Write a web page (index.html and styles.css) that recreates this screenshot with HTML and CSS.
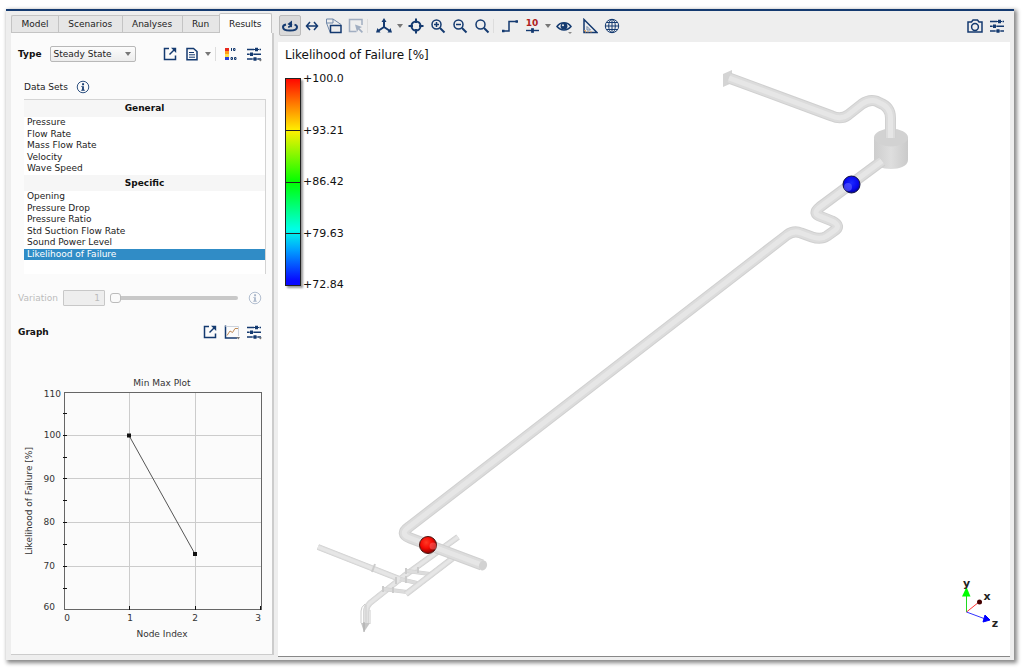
FILE: index.html
```html
<!DOCTYPE html>
<html lang="en">
<head>
<meta charset="utf-8">
<title>Likelihood of Failure</title>
<link rel="stylesheet" href="styles.css">
</head>
<body>
<svg class="defs" aria-hidden="true">
  <defs>
    <symbol id="i-export" viewBox="0 0 16 16"><path d="M7 2.500H2.500V13.500H13.500V9.500" class="ln"/><path d="M7.500 8.500 12 4" class="ln"/><path d="M9 1.800h5.200V7z" class="fl"/></symbol>
    <symbol id="i-sliders" viewBox="0 0 16 16"><path d="M1 3.500h7M13.500 3.500H15M1 8.200h2M7.500 8.200H15M1 13h5.500M11.500 13H15" class="ln"/><path d="M8 3.500h5M3 8.200h4.500M6.500 13h5" class="thin"/><path d="M9 1.800h3v3.400H9zM4 6.500h3v3.400H4zM7.500 11.300h3v3.400h-3z" class="fl"/></symbol>
    <symbol id="i-info" viewBox="0 0 16 16"><circle cx="8" cy="8" r="6.600" class="thin"/><path d="M7 3.800h2.200V6H7zM6 7h3v4h1v1.200H6V11h1V8H6z" class="fl"/></symbol>
  </defs>
</svg>

<div class="window">
  <aside class="sidebar">
    <nav class="tabs" role="tablist">
      <button class="tab" role="tab">Model</button>
      <button class="tab" role="tab">Scenarios</button>
      <button class="tab" role="tab">Analyses</button>
      <button class="tab" role="tab">Run</button>
      <button class="tab tab-active" role="tab" aria-selected="true">Results</button>
    </nav>
    <section class="panel">
      <div class="row type-row">
        <label class="strong" for="type">Type</label>
        <span class="select-wrap"><select id="type"><option>Steady State</option></select></span>
        <div class="tools">
          <button class="tool" aria-label="Open in window"><svg class="icon"><use href="#i-export"/></svg></button>
          <button class="tool" aria-label="Report"><svg class="icon" viewBox="0 0 16 16"><path d="M3 2.500h6.500L13 5.500V13.800H3z" class="ln"/><path d="M5 6.500h5M5 8.800h6M5 11.200h6" class="thin"/></svg></button>
          <button class="caret" aria-label="Report options"></button>
          <span class="sep"></span>
          <button class="tool" aria-label="Color scale"><svg class="icon" viewBox="0 0 16 16"><path d="M1 2h4v3H1z" fill="#e8281c"/><path d="M1 5h4v3H1z" fill="#ff9a1c"/><path d="M1 8h4v3H1z" fill="#ffe045"/><path d="M1 11h4v3H1z" fill="#2740d8"/><path d="M7.500 2v3M9.500 2.500H11v2H9.500zM7 11.500h1.500v2H7zM10.500 11.500H12v2h-1.500z" class="thin"/></svg></button>
          <button class="tool" aria-label="Settings"><svg class="icon" viewBox="0 0 16 16"><use href="#i-sliders"/><path d="M12.500 13.500H16L14.500 15.500z" fill="#777"/></svg></button>
        </div>
      </div>

      <div class="row data-row">
        <span>Data Sets</span>
        <svg class="icon info"><use href="#i-info"/></svg>
      </div>

      <div class="datasets">
        <h2 class="general-head">General</h2>
        <ul class="general">
          <li>Pressure</li><li>Flow Rate</li><li>Mass Flow Rate</li><li>Velocity</li><li>Wave Speed</li>
        </ul>
        <h2>Specific</h2>
        <ul class="specific">
          <li>Opening</li><li>Pressure Drop</li><li>Pressure Ratio</li><li>Std Suction Flow Rate</li><li>Sound Power Level</li><li class="selected">Likelihood of Failure</li>
        </ul>
      </div>

      <div class="row variation-row">
        <label for="variation">Variation</label>
        <input id="variation" class="number" type="text" value="1" disabled>
        <input class="slider" type="range" min="1" max="10" value="1" aria-label="Variation slider" disabled>
        <svg class="icon info"><use href="#i-info"/></svg>
      </div>

      <div class="row graph-row">
        <span class="strong">Graph</span>
        <div class="tools">
          <button class="tool" aria-label="Open graph in window"><svg class="icon"><use href="#i-export"/></svg></button>
          <button class="tool" aria-label="Plot"><svg class="icon" viewBox="0 0 16 16"><path d="M1.500 1.500v12.500H13" class="ln"/><path d="M1.500 2.500H14.500V12" stroke="#cbd2dc" fill="none"/><path d="M3 11.500 6 7l2.500 1.500 2.500-4h3" stroke="#c08a55" fill="none"/><path d="M12 13h4l-1.500 2.500z" fill="#777"/></svg></button>
          <button class="tool" aria-label="Graph settings"><svg class="icon" viewBox="0 0 16 16"><use href="#i-sliders"/><path d="M12.500 13.500H16L14.500 15.500z" fill="#777"/></svg></button>
        </div>
      </div>

      <svg class="chart" viewBox="20 372 248 272" role="img" aria-label="Min Max Plot">
        <path class="grid" d="M65 435.500h196M65 478.500h196M65 522.500h196M65 566.500h196M129.500 393v216M195.500 393v216"/>
        <rect class="frame" x="64.500" y="392.500" width="197" height="217"/>
        <path class="ticks" d="M63 413.500h4M63 435.500h4M63 457.500h4M63 478.500h4M63 500.500h4M63 522.500h4M63 544.500h4M63 566.500h4M63 588.500h4M129.500 606v4M195.500 606v4M260.500 606v4"/>
        <path class="series" d="M129 435.500 195 554"/>
        <path class="mark" d="M127 433.500h4v4h-4zM193 552h4v4h-4z"/>
        <text x="162" y="386" text-anchor="middle">Min Max Plot</text>
        <text x="61" y="397" text-anchor="end">110</text>
        <text x="61" y="438" text-anchor="end">100</text>
        <text x="55" y="482" text-anchor="end">90</text>
        <text x="55" y="525" text-anchor="end">80</text>
        <text x="55" y="569" text-anchor="end">70</text>
        <text x="55" y="610" text-anchor="end">60</text>
        <text x="67" y="621" text-anchor="middle">0</text>
        <text x="130" y="621" text-anchor="middle">1</text>
        <text x="195" y="621" text-anchor="middle">2</text>
        <text x="258" y="621" text-anchor="middle">3</text>
        <text x="162" y="637" text-anchor="middle">Node Index</text>
        <text transform="translate(32 501) rotate(-90)" text-anchor="middle">Likelihood of Failure [%]</text>
      </svg>
    </section>
  </aside>

  <main class="main">
    <div class="toolbar">
      <button class="tool pressed" aria-label="Rotate"><svg class="icon" viewBox="0 0 16 16"><path d="M4 6.500C2 7 1 8 1 9c0 2.200 3 3.600 7 3.600S15 11.200 15 9c0-1-.8-1.900-2.500-2.400" class="heavy"/><path d="M6 9C8.500 9 9.500 8 9.500 6" class="ln"/><path d="M5.500 6 10 2.500V9.500z" class="fl"/></svg></button>
      <button class="tool" aria-label="Pan"><svg class="icon" viewBox="0 0 16 16"><path d="M3 8h10M6 4 2.500 8 6 12M10 4 13.500 8 10 12" class="ln"/></svg></button>
      <button class="tool" aria-label="Windows"><svg class="icon" viewBox="0 0 16 16"><path d="M.500 1h6.500v4H.500zM7 1l8 5.500M.500 5 4 14" class="soft"/><path d="M4.500 7.500h10.500v7H4.500z" class="ln"/></svg></button>
      <button class="tool faded" aria-label="Select area"><svg class="icon" viewBox="0 0 16 16"><path d="M14 7V1.500H1.500v12h7" class="ln"/><path d="m7 6.500 7 2.500-2.500 1.200 3.500 3.500-1.200 1.200-3.500-3.500L9 14z" class="fl"/></svg></button>
      <span class="sep"></span>
      <button class="tool" aria-label="View axes"><svg class="icon" viewBox="0 0 16 16"><path d="M8 9V2M8 9l-6 4M8 9l6 4" class="heavy"/><path d="M8 0l2.500 4h-5zM0 14.500 1.500 10l3 4.500zM16 14.500 14.500 10l-3 4.500z" class="fl"/></svg></button>
      <button class="caret" aria-label="View options"></button>
      <button class="tool" aria-label="Center"><svg class="icon" viewBox="0 0 16 16"><circle cx="8" cy="8" r="4.500" class="heavy"/><path d="M8 .5v4.500M8 11v4.500M.5 8H5M11 8h4.500" class="heavy"/></svg></button>
      <button class="tool" aria-label="Zoom in"><svg class="icon" viewBox="0 0 16 16"><circle cx="6.500" cy="6.500" r="4.500" class="ln"/><path d="M4 6.500h5M6.500 4v5" class="ln"/><path d="m10 10 4.500 4.500" class="heavy"/></svg></button>
      <button class="tool" aria-label="Zoom out"><svg class="icon" viewBox="0 0 16 16"><circle cx="6.500" cy="6.500" r="4.500" class="ln"/><path d="M4 6.500h5" class="ln"/><path d="m10 10 4.500 4.500" class="heavy"/></svg></button>
      <button class="tool" aria-label="Zoom to fit"><svg class="icon" viewBox="0 0 16 16"><circle cx="6.500" cy="6.500" r="4.500" class="ln"/><path d="m10 10 4.500 4.500" class="heavy"/></svg></button>
      <span class="sep"></span>
      <button class="tool" aria-label="Pipe route"><svg class="icon" viewBox="0 0 16 16"><path d="M1 13h6V3.500h8" class="ln"/><path d="M0 11.800h2.500v2.500H0zM13.500 2.200H16v2.500h-2.500z" class="fl"/></svg></button>
      <button class="tool stacked" aria-label="Label size"><span class="ten">10</span><svg class="bar-icon" viewBox="0 0 14 5"><path d="M0 2.500h14" class="ln"/><path d="M5.500 0h3v5h-3z" class="fl"/></svg></button>
      <button class="caret" aria-label="Label options"></button>
      <button class="tool" aria-label="Visibility"><svg class="icon" viewBox="0 0 16 16"><path d="M1 8.500C4.500 3.500 11.500 3.500 15 8.500 11.500 13 4.500 13 1 8.500z" class="ln"/><circle cx="8" cy="8.200" r="3.400" class="fl"/><circle cx="7" cy="7.200" r="1" fill="#eee"/><path d="M12 14h4l-2 2z" fill="#888"/></svg></button>
      <span class="gap"></span>
      <button class="tool" aria-label="Measure angle"><svg class="icon" viewBox="0 0 16 16"><path d="M2 1.500v13h13z" class="ln"/><path d="M5 8.500v3.500h3.500z" class="soft"/><path d="M2 12.500h1.500v2M6 13v1.500M9 13v1.500" stroke="#d49a5a" fill="none"/></svg></button>
      <button class="tool" aria-label="Globe"><svg class="icon" viewBox="0 0 16 16"><circle cx="8" cy="8" r="6.700" class="thin"/><ellipse cx="8" cy="8" rx="3.300" ry="6.700" class="thin"/><path d="M8 1v14M1 8h14M2.500 4.500h11M2.500 11.500h11" class="thin"/></svg></button>
      <span class="spacer"></span>
      <button class="tool" aria-label="Snapshot"><svg class="icon" viewBox="0 0 16 16"><path d="M1 4h3.500L6 2h4.500L12 4h3v10H1z" class="ln"/><circle cx="8" cy="9" r="3.400" class="ln"/></svg></button>
      <button class="tool" aria-label="View settings"><svg class="icon"><use href="#i-sliders"/></svg></button>
    </div>

    <div class="view">
      <svg class="scene" viewBox="278 42 732 614" role="img" aria-label="Pipe model">
        <defs>
          <linearGradient id="drum"><stop offset="0" stop-color="#cdcdcd"/><stop offset=".5" stop-color="#dedede"/><stop offset="1" stop-color="#cacaca"/></linearGradient>
          <radialGradient id="red" cx=".4" cy=".35" r=".7"><stop offset="0" stop-color="#ff3a24"/><stop offset=".5" stop-color="#f40a04"/><stop offset="1" stop-color="#700"/></radialGradient>
          <radialGradient id="blue" cx=".5" cy=".4" r=".7"><stop offset="0" stop-color="#1a28ff"/><stop offset=".55" stop-color="#0808ee"/><stop offset="1" stop-color="#000060"/></radialGradient>
          <path id="p-small" d="M318 547 402 580M458 537 404 576 370 603Q366 607 366 612V624"/>
          <path id="p-side" d="M453 558 406 594"/>
          <path id="p-cross" d="M407 571 430 574M400 579 417 583M383 589 407 592"/>
          <path id="p-long" d="M882 161 820 207Q811 214 822 217L832 221Q842 226 834 231L827 236Q821 240 812 237L801 233Q794 230 787 235L409 527Q399 534 410 538L482 565"/>
          <path id="p-top" d="M729 78 832 116Q841 120 848 115L862 104Q869 99 876 101L880 103Q890.500 107 890.500 118V138"/>
        </defs>
        <g class="pipe-s"><use href="#p-small" class="edge"/><use href="#p-small" class="body"/><use href="#p-small" class="lit"/></g>
        <path d="M361 623V611Q361 607 365 604M366 605v20M370 624V610" class="thin-edge"/>
        <path d="M361 623 364 632 370 623z" fill="#c6c6c6"/>
        <path d="M364 622v10" stroke="#aaa"/>
        <g class="pipe-xs"><use href="#p-cross" class="edge"/><use href="#p-cross" class="body"/></g>
        <g class="pipe-s"><use href="#p-side" class="edge"/><use href="#p-side" class="body"/><use href="#p-side" class="lit"/></g>
        <path d="m375 564-3 8M406 568v6M418 567v6M396 577v7M406 576v7M383 586v6M393 587v6" class="collar"/>
        <path d="M874 138v22c0 12 34 12 34 0v-22z" fill="url(#drum)"/>
        <ellipse cx="891" cy="137.500" rx="17" ry="9" fill="#d2d2d2"/>
        <path d="M723 74 732 70V83L723 87z" fill="#d4d4d4"/>
        <g class="pipe-l"><use href="#p-long" class="edge"/><use href="#p-long" class="body"/><use href="#p-long" class="lit"/></g>
        <ellipse cx="483" cy="565.500" rx="4" ry="5" transform="rotate(20 483 565.500)" fill="#d2d2d2"/>
        <g class="pipe-l"><use href="#p-top" class="edge"/><use href="#p-top" class="body"/><use href="#p-top" class="lit"/></g>
        <circle cx="428" cy="545" r="8.500" fill="url(#red)" stroke="#4a1712"/>
        <circle cx="433" cy="546" r="3.500" fill="#f66" opacity=".55"/>
        <circle cx="851.500" cy="184.500" r="8.500" fill="url(#blue)" stroke="#101040"/>
        <circle cx="848" cy="187" r="4" fill="#66f" opacity=".6"/>
      </svg>

      <div class="legend">
        <h1>Likelihood of Failure [%]</h1>
        <div class="scale">
          <div class="colors"><span></span><span></span><span></span><span></span></div>
          <div class="values"><span>+100.0</span><span>+93.21</span><span>+86.42</span><span>+79.63</span><span>+72.84</span></div>
        </div>
      </div>

      <svg class="axes" viewBox="958 574 44 58" role="img" aria-label="Axes">
        <path d="M966.500 612V596" stroke="#20d820"/><path d="M962 596.500 966.500 587 970.500 596.500z" fill="#0f0"/>
        <path d="M966.500 612 979 602" stroke="#f33"/><circle cx="979.500" cy="602" r="2.500" fill="#400"/>
        <path d="M966.500 612 984 618.500" stroke="#33f"/><path d="M985 615 990 620 983 622z" fill="#00f" stroke="#00f"/>
        <text x="966.500" y="587" text-anchor="middle">y</text>
        <text x="987" y="600" text-anchor="middle">x</text>
        <text x="995" y="627" text-anchor="middle">z</text>
      </svg>
    </div>
  </main>
</div>
</body>
</html>
```
FILE: styles.css
```css
* { box-sizing: border-box; }

body {
  margin: 0;
  height: 100vh;
  padding: 9px 10px 8px 6px;
  display: flex;
  background: #fff;
  color: #222;
  font: 9px/11px "DejaVu Sans", sans-serif;
}

button, input, select { font: inherit; color: inherit; }
h1, h2, ul { margin: 0; padding: 0; }
ul { list-style: none; }
.defs { position: absolute; width: 0; height: 0; }

.window {
  flex: 1;
  min-width: 0;
  display: grid;
  grid-template-columns: 272px 1fr;
  border-top: 2px solid #143a70;
  background: #eee;
  box-shadow: 2px 2px 4px 1px #888;
}

/* icon strokes */
.icon { display: block; width: 16px; height: 16px; color: #143a70; }
.ln, .thin, .heavy, .soft { fill: none; stroke: currentColor; }
.ln { stroke-width: 1.5; }
.thin { stroke-width: 1; }
.heavy { stroke-width: 2; }
.soft { stroke: #6f87a8; stroke-width: 1; }
.fl { fill: currentColor; }

.tool {
  flex: none;
  width: 22px;
  height: 21px;
  padding: 0;
  border: 1px solid transparent;
  border-radius: 2px;
  background: none;
  display: flex;
  align-items: center;
  justify-content: center;
}
.pressed { background: #dadada; border-color: #bbb; }
.faded { opacity: 0.35; }
.caret {
  flex: none;
  width: 10px;
  height: 20px;
  padding: 0;
  border: 0;
  background: none;
  display: flex;
  align-items: center;
  justify-content: center;
}
.caret::before, .select-wrap::after {
  content: "";
  border: 3px solid transparent;
  border-top: 4px solid #777;
  border-bottom: 0;
}
.sep { flex: none; width: 6px; height: 14px; border-left: 1px solid #ddd; }
.gap { width: 4px; }
.spacer { flex: 1; }

/* sidebar */
.sidebar { display: flex; flex-direction: column; padding: 3px 4px 5px 5px; min-height: 0; }
.tabs { display: flex; align-items: flex-end; height: 19px; padding-right: 2px; }
.tab {
  flex: auto;
  height: 18px;
  padding: 0 8px;
  border: 1px solid #c4c4c4;
  border-right: 0;
  background: #e6e6e6;
  line-height: 16px;
}
.tab:first-child { border-radius: 2px 0 0 0; }
.tab-active {
  height: 20px;
  border-right: 1px solid #c4c4c4;
  border-bottom: 0;
  border-radius: 2px 2px 0 0;
  background: #fbfbfb;
}
.panel {
  flex: 1;
  border: solid #ccc;
  border-width: 0 2px 1px 0;
  background: #fbfbfb;
  padding-top: 11px;
}
.row { display: flex; align-items: center; height: 18px; padding: 0 7px; }
.strong { font-weight: bold; color: #111; }
.tools { display: flex; align-items: center; margin-left: auto; }

.type-row { height: 20px; }
.select-wrap { position: relative; margin-left: 9px; }
.select-wrap::after { position: absolute; right: 5px; top: 6px; }
.select-wrap select {
  appearance: none;
  display: block;
  width: 86px;
  height: 16px;
  padding: 0 2px;
  border: 1px solid #b8b8b8;
  border-radius: 2px;
  background: linear-gradient(#fcfcfc, #ececec);
}
.type-row .sep { margin-left: 2px; }

.data-row { margin-top: 14px; padding-left: 13px; gap: 8px; }
.info { width: 14px; height: 14px; }

.datasets {
  height: 175px;
  margin: 3px 6px 0 13px;
  border: solid #d4d4d4;
  border-width: 1px 1px 0 0;
  background: #fff;
}
.datasets h2 { font-size: 9px; line-height: 16px; text-align: center; background: #f6f6f6; color: #111; }
.datasets .general-head { padding-bottom: 1px; }
.datasets ul { display: grid; grid-auto-rows: 1fr; }
.datasets li { padding-left: 3px; }
.general { height: 58px; }
.specific { height: 69px; }
.selected { background: #308cc6; color: #fff; }

.variation-row { margin-top: 15px; color: #bbb; }
.number {
  width: 42px;
  height: 16px;
  margin: 0 5px;
  padding: 0 4px;
  border: 1px solid #c8c8c8;
  border-radius: 1px;
  background: #eee;
  text-align: right;
}
.slider { appearance: none; flex: 1; min-width: 0; height: 12px; margin: 0 10px 0 0; background: none; }
.slider::-webkit-slider-runnable-track { height: 4px; border-radius: 2px; background: #c8c8c8; }
.slider::-webkit-slider-thumb {
  appearance: none;
  width: 11px;
  height: 10px;
  margin-top: -3px;
  border: 1px solid #bbb;
  border-radius: 3px;
  background: #fafafa;
}
.variation-row .info { opacity: 0.35; margin-right: 3px; }

.graph-row { margin-top: 16px; }
.chart { display: block; width: 100%; padding: 0 4px 0 9px; margin-top: 31px; }
.chart text { font-size: 9px; fill: #333; }
.grid { stroke: #ccc; }
.frame { fill: none; stroke: #666; }
.ticks { stroke: #111; stroke-width: 1; }
.series { stroke: #555; }
.mark { fill: #111; }

/* viewer */
.main { display: flex; flex-direction: column; min-width: 0; padding: 0 4px 3px 0; }
.toolbar { display: flex; align-items: center; height: 31px; padding: 0 2px 2px 1px; }
.stacked { flex-direction: column; gap: 1px; }
.ten { font-size: 9px; line-height: 8px; font-weight: bold; color: #b02020; }
.bar-icon { width: 13px; height: 5px; color: #143a70; }
.view { position: relative; flex: 1; min-height: 0; background: #fff; border-bottom: 1px solid #888; }
.scene { display: block; width: 100%; height: 100%; position: absolute; }

.edge, .body, .lit { fill: none; stroke-linejoin: round; }
.edge { stroke: #d0d0d0; }
.body { stroke: #dcdcdc; }
.lit { stroke: #e6e6e6; }
.pipe-l .edge { stroke-width: 11; }
.pipe-l .body { stroke-width: 9; }
.pipe-l .lit { stroke-width: 5; }
.pipe-s .edge { stroke-width: 6; }
.pipe-s .body { stroke-width: 5; }
.pipe-s .lit { stroke-width: 3; }
.pipe-xs .edge { stroke-width: 4; }
.pipe-xs .body { stroke-width: 3; }
.thin-edge { fill: none; stroke: #ccc; }
.collar { fill: none; stroke: #ccc; stroke-width: 2; }

.legend { position: absolute; left: 7px; top: 5px; color: #111; }
.legend h1 { font-size: 12px; line-height: 16px; font-weight: normal; }
.scale { display: flex; gap: 2px; margin-top: 9px; font-size: 11px; }
.colors {
  display: flex;
  flex-direction: column;
  width: 16px;
  height: 208px;
  margin-top: 6px;
  border: 1px solid #222;
  background: linear-gradient(#ff0800, #ff7a00 12%, #fff000 25%, #0f0 50%, #00ffe8 73%, #00a0ff 83%, #0808ff 98%);
  box-shadow: 2px 2px 2px #999;
}
.colors span { flex: 1; }
.colors span + span { border-top: 1px solid #222; }
.values { display: flex; flex-direction: column; justify-content: space-between; height: 220px; line-height: 14px; }

.axes { position: absolute; right: 8px; bottom: 24px; width: 44px; height: 58px; }
.axes text { font-size: 11px; font-weight: bold; fill: #222; }
```
